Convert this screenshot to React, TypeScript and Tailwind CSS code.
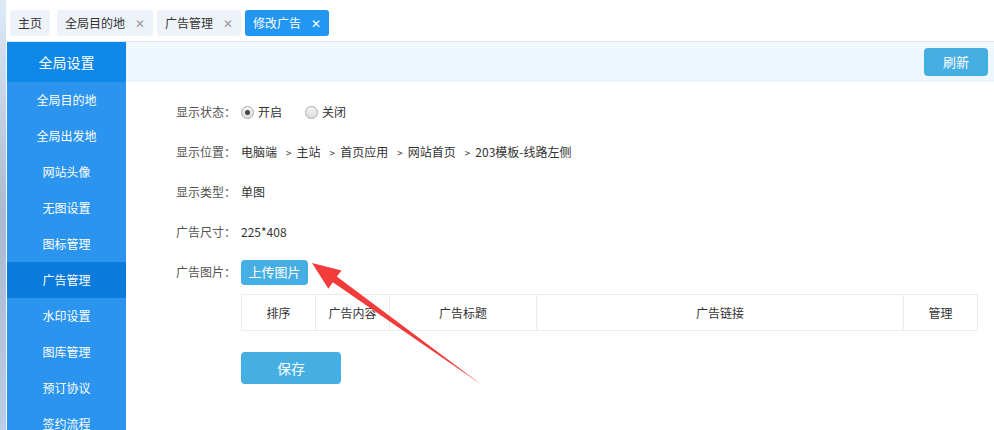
import React from "react";

const font = { fontFamily: '"Noto Sans CJK SC", "Noto Sans", sans-serif' };

const menu = [
  "全局目的地",
  "全局出发地",
  "网站头像",
  "无图设置",
  "图标管理",
  "广告管理",
  "水印设置",
  "图库管理",
  "预订协议",
  "签约流程",
];

function Tab({ label, active, closable }: { label: string; active?: boolean; closable?: boolean }) {
  return (
    <div
      className={
        "flex h-[26px] items-center rounded-[3px] px-[8px] text-[12px] " +
        (active ? "bg-[#2196f3] text-white" : "bg-[#eef2f9] text-[#333]")
      }
    >
      <span>{label}</span>
      {closable && (
        <span className={"ml-[10px] text-[12px] " + (active ? "text-white" : "text-[#999]")}>✕</span>
      )}
    </div>
  );
}

function Row({ label, children }: { label: string; children: React.ReactNode }) {
  return (
    <div className="flex h-[40px] items-center text-[12px]">
      <div className="w-[65px] text-[#555]">{label}</div>
      <div className="flex items-center text-[#333]">{children}</div>
    </div>
  );
}

function Radio({ checked, label }: { checked?: boolean; label: string }) {
  return (
    <div className="flex items-center">
      <span className="flex h-[13px] w-[13px] items-center justify-center rounded-full border border-[#aaa] bg-gradient-to-b from-[#f4f4f4] to-[#dcdcdc]">
        {checked && <span className="h-[5px] w-[5px] rounded-full bg-[#444]" />}
      </span>
      <span className="ml-[4px] text-[#333]">{label}</span>
    </div>
  );
}

export default function App() {
  const crumbs = ["主站", "首页应用", "网站首页", "203模板-线路左侧"];
  return (
    <div className="relative flex h-[430px] w-[994px] overflow-hidden bg-white" style={font}>
      {/* window edge */}
      <div className="flex h-full w-[7px] shrink-0">
        <div className="h-full w-[6px] bg-gradient-to-b from-[#dfeaf7] via-[#a9b9cf] to-[#b9cde6]" />
        <div className="h-full w-[1px] bg-white" />
      </div>

      <div className="flex flex-1 flex-col">
        {/* tabs */}
        <div className="flex h-[42px] shrink-0 items-start border-b border-[#dfe6ef] pl-[3px] pt-[10px]">
          <Tab label="主页" />
          <div className="ml-[7px]">
            <Tab label="全局目的地" closable />
          </div>
          <div className="ml-[4px]">
            <Tab label="广告管理" closable />
          </div>
          <div className="ml-[4px]">
            <Tab label="修改广告" closable active />
          </div>
        </div>

        <div className="flex flex-1">
          {/* sidebar */}
          <div className="w-[119px] shrink-0 bg-[#2a94ef] text-white">
            <div className="flex h-[40px] items-center justify-center bg-[#0d88e9] text-[14px]">全局设置</div>
            {menu.map((m) => (
              <div
                key={m}
                className={
                  "flex h-[36px] items-center justify-center text-[12px] " +
                  (m === "广告管理" ? "bg-[#0a7bdb]" : "")
                }
              >
                {m}
              </div>
            ))}
          </div>

          {/* main */}
          <div className="flex-1">
            <div className="flex h-[40px] items-center justify-end bg-[#eff7fe] pr-[6px]">
              <button className="h-[28px] w-[64px] rounded-[4px] bg-[#45aee3] text-[13px] text-white">刷新</button>
            </div>

            <div className="pl-[50px] pr-[16px] pt-[10px]">
              <Row label="显示状态：">
                <Radio checked label="开启" />
                <div className="ml-[23px]">
                  <Radio label="关闭" />
                </div>
              </Row>
              <Row label="显示位置：">
                <span>电脑端</span>
                {crumbs.map((c) => (
                  <span key={c} className="flex items-center">
                    <span className="ml-[9px] mr-[5px] text-[10px]">&gt;</span>
                    <span>{c}</span>
                  </span>
                ))}
              </Row>
              <Row label="显示类型：">单图</Row>
              <Row label="广告尺寸：">225*408</Row>
              <Row label="广告图片：">
                <button className="h-[25px] w-[67px] rounded-[4px] bg-[#45aee3] text-[13px] text-white">上传图片</button>
              </Row>

              <div className="ml-[65px] mt-[2px]">
                <div className="flex h-[37px] border border-[#ececec] text-[12px] text-[#333]">
                  <div className="flex w-[74px] items-center justify-center border-r border-[#ececec]">排序</div>
                  <div className="flex w-[74px] items-center justify-center border-r border-[#ececec]">广告内容</div>
                  <div className="flex w-[147px] items-center justify-center border-r border-[#ececec]">广告标题</div>
                  <div className="flex flex-1 items-center justify-center border-r border-[#ececec]">广告链接</div>
                  <div className="flex w-[73px] items-center justify-center">管理</div>
                </div>
                <button className="mt-[21px] h-[32px] w-[100px] rounded-[4px] bg-[#45aee3] text-[14px] text-white">保存</button>
              </div>
            </div>
          </div>
        </div>
      </div>

      {/* annotation arrow */}
      <svg className="pointer-events-none absolute left-0 top-0" width="994" height="430">
        <polygon
          points="312,263 341.5,270.5 336.8,276.6 482,385 332.8,282.2 328.4,288.8"
          fill="#f23b3b"
        />
      </svg>
    </div>
  );
}
